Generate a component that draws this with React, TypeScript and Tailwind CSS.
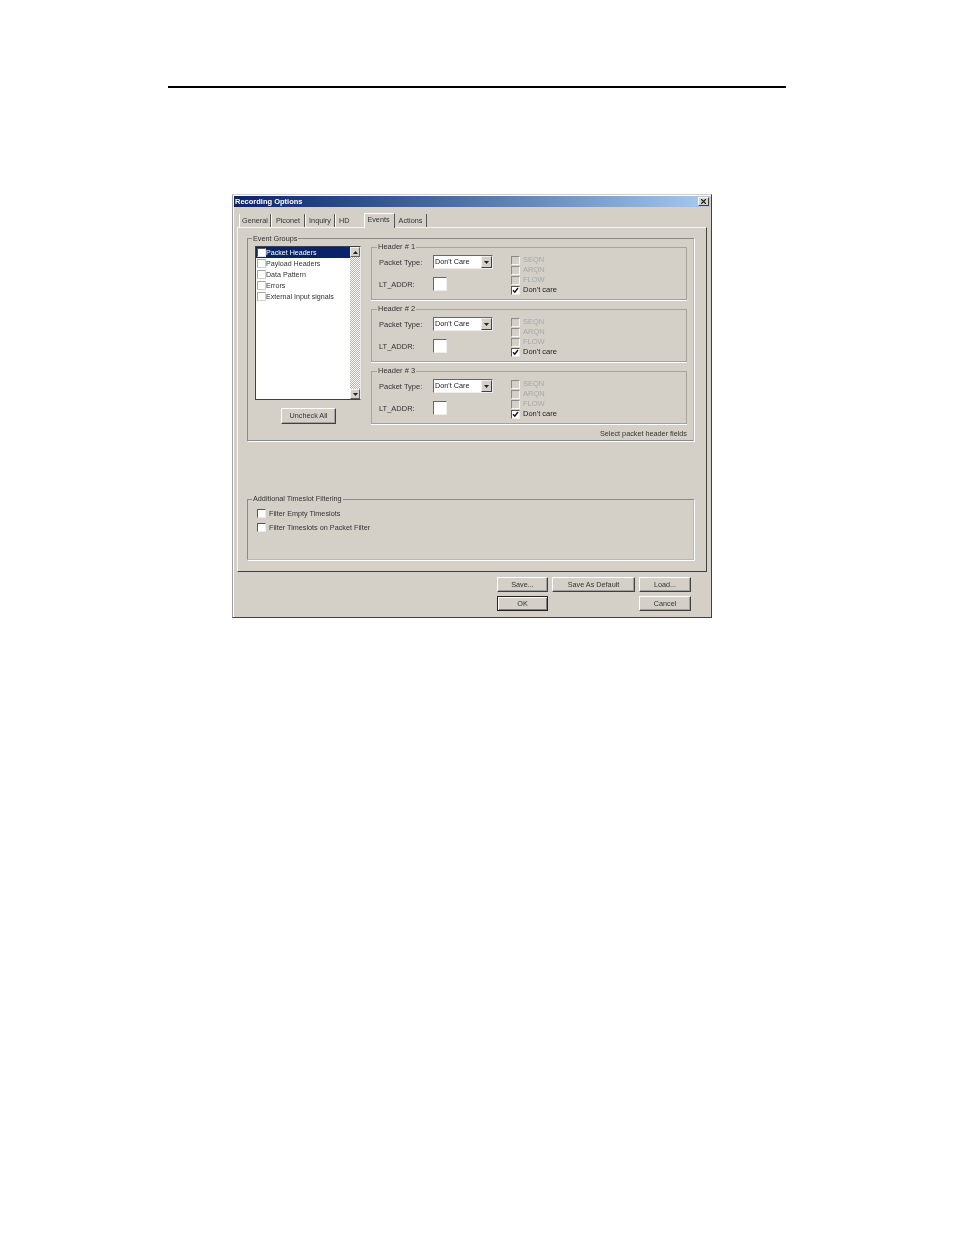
const font = "font-['Liberation_Sans',Arial,sans-serif]";

function Arrow({ dir }: { dir: 'up' | 'down' }) {
    return (
        <svg className="w-[5px] h-[3px]" viewBox="0 0 5 3">
            <polygon points={dir === 'up' ? '2.5,0 5,3 0,3' : '0,0 5,0 2.5,3'} fill="#222" />
        </svg>
    );
}

function CheckBox({ checked, tone = 'normal' }: { checked?: boolean; tone?: 'normal' | 'disabled' | 'list' }) {
    const look =
        tone === 'disabled'
            ? 'bg-[#d4d0c8] border-[#8a8a8a] border-r-[#f4f4f4] border-b-[#f4f4f4]'
            : tone === 'list'
              ? 'bg-white border-[#a8a8a8] border-r-[#d0d0d0] border-b-[#d0d0d0]'
              : 'bg-white border-[#555] border-r-[#e8e8e8] border-b-[#e8e8e8]';
    return (
        <span className={`w-[9px] h-[9px] shrink-0 border flex items-center justify-center ${look}`}>
            {checked && (
                <svg className="w-[7px] h-[7px]" viewBox="0 0 7 7" fill="none">
                    <path d="M1 3.2 L2.8 5.2 L6 1" stroke="#111" strokeWidth="1.4" />
                </svg>
            )}
        </span>
    );
}

function Btn({ label, width, isDefault }: { label: string; width: string; isDefault?: boolean }) {
    return (
        <button
            className={`${width} h-[15px] pt-px flex items-center justify-center text-[7.25px] text-[#333] bg-[#d4d0c8] border ${
                isDefault
                    ? 'border-[#222] shadow-[inset_1px_1px_0_#fff,inset_-1px_-1px_0_#808080]'
                    : 'border-white border-r-[#404040] border-b-[#404040] shadow-[inset_-1px_-1px_0_#a0a0a0]'
            }`}
        >
            {label}
        </button>
    );
}

function HeaderBox({ n }: { n: number }) {
    return (
        <div className="relative h-[53px] border border-[#a8a49c] border-b-[#a0a0a0] shadow-[0_1px_0_#fff] flex pl-[7px] pt-[7px]">
            <span className="absolute -top-[6px] left-[5px] px-[1px] bg-[#d4d0c8] text-[7.5px] leading-[9px] text-[#333]">
                Header # {n}
            </span>
            <div className="w-[132px] flex flex-col gap-[8px]">
                <div className="flex items-center">
                    <span className="w-[54px] pt-px text-[7.5px] text-[#333]">Packet Type:</span>
                    <div className="w-[60px] h-[14px] bg-white border border-[#666] border-r-[#eee] border-b-[#eee] flex items-center justify-between pl-[1px]">
                        <span className="pt-px text-[7.25px] text-[#222]">Don't Care</span>
                        <span className="w-[11px] h-[12px] bg-[#d4d0c8] border border-[#eee] border-r-[#404040] border-b-[#404040] flex items-center justify-center">
                            <Arrow dir="down" />
                        </span>
                    </div>
                </div>
                <div className="flex items-center">
                    <span className="w-[54px] pt-px text-[7.5px] text-[#333]">LT_ADDR:</span>
                    <span className="w-[14px] h-[14px] bg-white border border-[#666] border-r-[#eee] border-b-[#eee]" />
                </div>
            </div>
            <div className="flex flex-col">
                {['SEQN', 'ARQN', 'FLOW'].map((t) => (
                    <div key={t} className="h-[10px] flex items-center gap-[3px]">
                        <CheckBox tone="disabled" />
                        <span className="text-[7.5px] text-[#a8a8a8]">{t}</span>
                    </div>
                ))}
                <div className="h-[10px] flex items-center gap-[3px]">
                    <CheckBox checked />
                    <span className="text-[7.5px] text-[#222]">Don't care</span>
                </div>
            </div>
        </div>
    );
}

export default function App() {
    const groups = ['Packet Headers', 'Payload Headers', 'Data Pattern', 'Errors', 'External Input signals'];
    const tabs = [
        { label: 'General', w: 'w-[32px]', extra: 'justify-center' },
        { label: 'Piconet', w: 'w-[34px]', extra: 'justify-center' },
        { label: 'Inquiry', w: 'w-[30px]', extra: 'justify-center' },
        { label: 'HD', w: 'w-[29px]', extra: 'pl-[3px] border-r-transparent' },
    ];

    return (
        <div className={`w-[954px] h-[1235px] bg-white pt-[86px] ${font}`}>
            <div className="ml-[168px] w-[618px] h-[2px] bg-black" />

            {/* Dialog */}
            <div className="ml-[232px] mt-[106px] w-[480px] h-[424px] bg-[#d4d0c8] border border-t-[#d4d0c8] border-l-[#a0a0a0] border-r-[#404040] border-b-[#404040] shadow-[inset_1px_1px_0_#fff] px-[4px] pt-[1px] blur-[0.25px]">
                {/* Title bar */}
                <div className="h-[11px] -mx-[3px] bg-linear-to-r from-[#0a246a] to-[#a6caf0] flex items-center justify-between pl-[1px] pr-[1px]">
                    <span className="text-[7.5px] font-bold text-white">Recording Options</span>
                    <span className="w-[11px] h-[9px] bg-[#d4d0c8] border border-white border-r-[#404040] border-b-[#404040] flex items-center justify-center">
                        <svg className="w-[5px] h-[5px]" viewBox="0 0 5 5" fill="none">
                            <path d="M0 0 L5 5 M5 0 L0 5" stroke="#111" strokeWidth="1.1" />
                        </svg>
                    </span>
                </div>

                {/* Tabs */}
                <div className="h-[15px] mt-[5px] pl-[2px] flex items-end">
                    {tabs.map((t) => (
                        <div
                            key={t.label}
                            className={`${t.w} ${t.extra} h-[13px] pt-[2px] flex items-center text-[7.25px] text-[#333] border-l border-l-white border-r border-r-[#555]`}
                        >
                            {t.label}
                        </div>
                    ))}
                    <div className="w-[31px] h-[15px] -mb-px z-10 bg-[#d4d0c8] flex items-center justify-center text-[7.25px] text-[#333] border-l border-t border-white border-r border-r-[#555] pb-[2px] pr-[2px]">
                        Events
                    </div>
                    <div className="w-[32px] h-[13px] pt-[2px] flex items-center justify-center text-[7.25px] text-[#333] border-r border-r-[#555]">
                        Actions
                    </div>
                </div>

                {/* Tab panel */}
                <div className="h-[345px] border border-t-[#f4f4f4] border-l-[#f4f4f4] border-r-[#404040] border-b-[#404040] pl-[9px] pr-[12px] pt-[10px]">
                    {/* Event Groups */}
                    <div className="relative h-[203px] border border-[#8a8a8a] border-r-[#b8b8b8] shadow-[1px_1px_0_#fff] flex pl-[7px] pt-[7px]">
                        <span className="absolute -top-[5px] left-[4px] px-[1px] bg-[#d4d0c8] text-[7.25px] leading-[9px] text-[#333]">
                            Event Groups
                        </span>

                        <div className="w-[106px] mr-[10px] flex flex-col items-center">
                            <div className="w-full h-[154px] flex bg-white border border-[#404040] border-r-[#e8e8e8]">
                                <div className="flex-1 flex flex-col">
                                    {groups.map((g, i) => (
                                        <div
                                            key={g}
                                            className={`h-[11px] flex items-center pl-[1px] text-[7.1px] ${
                                                i === 0 ? 'bg-[#0a246a] text-white' : 'text-[#333]'
                                            }`}
                                        >
                                            <CheckBox tone={i === 0 ? 'normal' : 'list'} />
                                            <span className="pt-px">{g}</span>
                                        </div>
                                    ))}
                                </div>
                                <div className="w-[10px] flex flex-col bg-[repeating-conic-gradient(#f8f8f8_0_25%,#b8b4ac_0_50%)] bg-[length:2px_2px]">
                                    {(['up', 'down'] as const).map((d) => (
                                        <span
                                            key={d}
                                            className={`w-[10px] h-[10px] bg-[#d4d0c8] border border-[#f4f4f4] border-r-[#606060] border-b-[#606060] flex items-center justify-center ${
                                                d === 'down' ? 'mt-auto' : ''
                                            }`}
                                        >
                                            <Arrow dir={d} />
                                        </span>
                                    ))}
                                </div>
                            </div>
                            <div className="mt-[8px] pl-px">
                                <Btn label="Uncheck All" width="w-[55px] h-[16px]" />
                            </div>
                        </div>

                        <div className="w-[316px] mt-px flex flex-col gap-[9px]">
                            <HeaderBox n={1} />
                            <HeaderBox n={2} />
                            <HeaderBox n={3} />
                            <div className="-mt-[4px] text-right text-[7.25px] text-[#333]">Select packet header fields</div>
                        </div>
                    </div>

                    {/* Additional Timeslot Filtering */}
                    <div className="relative mt-[58px] h-[61px] border border-[#8a8a8a] border-r-[#b8b8b8] border-b-[#b8b8b8] shadow-[1px_1px_0_#fff] flex flex-col gap-[5px] pl-[9px] pt-[9px]">
                        <span className="absolute -top-[6px] left-[4px] px-[1px] bg-[#d4d0c8] text-[7.25px] leading-[9px] text-[#333]">
                            Additional Timeslot Filtering
                        </span>
                        {['Filter Empty Timeslots', 'Filter Timeslots on Packet Filter'].map((t) => (
                            <div key={t} className="h-[9px] flex items-center gap-[3px]">
                                <CheckBox />
                                <span className="pt-px text-[7.25px] text-[#333]">{t}</span>
                            </div>
                        ))}
                    </div>
                </div>

                {/* Bottom buttons */}
                <div className="pt-[5px] pl-[260px] flex flex-col gap-[4px]">
                    <div className="flex gap-[4px]">
                        <Btn label="Save..." width="w-[51px]" />
                        <Btn label="Save As Default" width="w-[83px]" />
                        <Btn label="Load..." width="w-[52px]" />
                    </div>
                    <div className="flex justify-between w-[194px]">
                        <Btn label="OK" width="w-[51px]" isDefault />
                        <Btn label="Cancel" width="w-[52px]" />
                    </div>
                </div>
            </div>
        </div>
    );
}
